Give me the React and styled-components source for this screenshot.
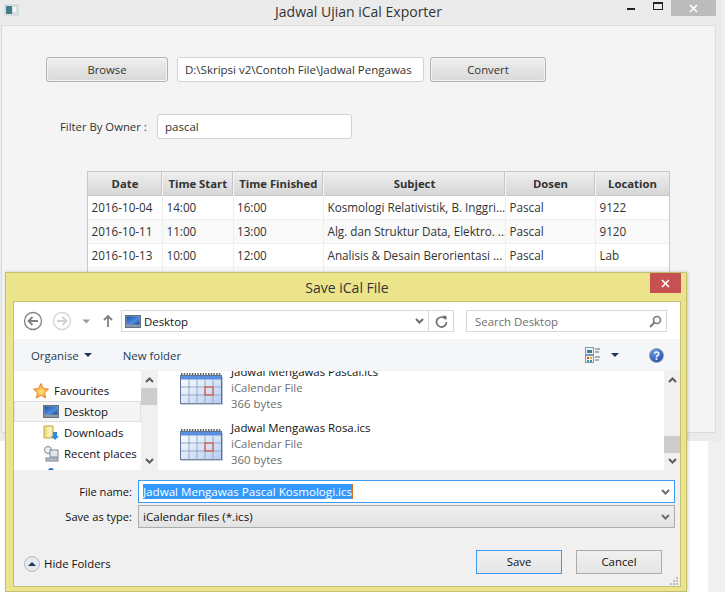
import styled, { createGlobalStyle } from 'styled-components';

const GlobalStyle = createGlobalStyle`
  html, body {
    margin: 0;
    padding: 0;
    background: #f0f0f0;
  }
  * { box-sizing: border-box; }
`;

const font = `"Open Sans", "Noto Sans", "Liberation Sans", sans-serif`;

const Desktop = styled.div`
  position: relative;
  width: 725px;
  height: 592px;
  overflow: hidden;
  font-family: ${font};
  color: #222;
  background: linear-gradient(to right, #fff 708px, #f0f0f0 708px);
`;

/* ---- javafx window behind ---- */
const AppWindow = styled.div`
  width: 722px;
  height: 441px;
  background: #ebebeb;
  padding-right: 6px;
  padding-left: 1px;
  display: flex;
  flex-direction: column;
`;
const AppTitleBar = styled.div`
  height: 25px;
  flex: none;
  display: grid;
  grid-template-columns: 1fr auto 1fr;
  align-items: start;
`;
const AppIcon = styled.div`
  margin: 4px 0 0 3px;
  line-height: 0;
`;
const AppTitle = styled.div`
  font-size: 14px;
  line-height: 23px;
  color: #333;
`;
const Controls = styled.div`
  justify-self: end;
  display: flex;
  align-items: flex-start;
`;
const CtrlMin = styled.div`
  width: 8px;
  height: 2px;
  margin: 8px 18px 0 0;
  background: #222;
`;
const CtrlMax = styled.div`
  width: 10px;
  height: 8px;
  margin: 2px 8px 0 0;
  border: 1px solid #222;
  border-top-width: 2px;
`;
const CtrlClose = styled.div`
  width: 45px;
  height: 16px;
  background: #bcbcbc;
  color: #fff;
  display: flex;
  align-items: center;
  justify-content: center;
`;
const Panel = styled.div`
  flex: none;
  height: 408px;
  background: #f4f4f4;
  border: 1px solid #dcdcdc;
  padding: 31px 0 0 44px;
  overflow: hidden;
`;
const Toolbar = styled.div`
  display: flex;
  gap: 6px;
  height: 25px;
`;
const FxButton = styled.div`
  width: ${(p) => p.$w}px;
  margin-right: ${(p) => p.$mr || 0}px;
  height: 25px;
  border: 1px solid #b2b2b2;
  border-radius: 3px;
  background: linear-gradient(#efefef, #d8d8d8);
  box-shadow: inset 0 0 0 1px #f4f4f4;
  font-size: 11.3px;
  line-height: 23px;
  text-align: center;
  color: #333;
`;
const FxInput = styled.div`
  width: ${(p) => p.$w}px;
  height: 25px;
  border: 1px solid #d2d2d2;
  border-radius: 3px;
  background: #fff;
  padding: 0 7px;
  font-size: 11.5px;
  line-height: 23px;
  color: #333;
  white-space: nowrap;
`;
const FieldText = styled.div`
  overflow: hidden;
  margin-right: 1px;
`;
const FilterRow = styled.div`
  display: flex;
  align-items: center;
  margin: 32px 0 0 14px;
`;
const FilterLabel = styled.div`
  width: 97px;
  font-size: 11.3px;
  color: #333;
`;
const Table = styled.div`
  width: 583px;
  margin: 32px 0 0 41px;
  border: 1px solid #c8c8c8;
  border-bottom: 0;
`;
const grid = `
  display: grid;
  grid-template-columns: 75px 70.5px 90.5px 182px 90px 1fr;
`;
const HeadRow = styled.div`
  ${grid}
  height: 24px;
  background: linear-gradient(#efefef, #d6d6d6);
  border-bottom: 1px solid #c8c8c8;
`;
const HeadCell = styled.div`
  border-right: 1px solid #f4f4f4;
  box-shadow: inset -1px 0 0 #c8c8c8;
  font-size: 11.3px;
  font-weight: 700;
  line-height: 24px;
  text-align: center;
  color: #333;
  white-space: nowrap;
  &:last-child { border-right: 0; box-shadow: none; }
`;
const Row = styled.div`
  ${grid}
  height: 24px;
  background: ${(p) => (p.$odd ? '#f9f9f9' : '#fff')};
  border-bottom: 1px solid #f0f0f0;
`;
const Cell = styled.div`
  border-right: 1px solid #eee;
  padding-left: 3.5px;
  font-size: 11.7px;
  line-height: 23px;
  color: #333;
  white-space: nowrap;
  overflow: hidden;
  &:last-child { border-right: 0; }
`;

/* ---- save dialog ---- */
const Dialog = styled.div`
  position: absolute;
  left: 5px;
  top: 272px;
  width: 682px;
  height: 320px;
  background: #ebe48b;
  border: 1px solid #c4bf72;
  box-shadow: 1px 0 3px rgba(0, 0, 0, 0.2);
  padding: 0 5px 4px 7px;
  display: flex;
  flex-direction: column;
`;
const DialogTitleBar = styled.div`
  height: 28px;
  flex: none;
  position: relative;
  display: flex;
  justify-content: center;
  align-items: center;
  font-size: 14px;
  color: #333;
`;
const DialogClose = styled.div`
  position: absolute;
  top: 0;
  right: 0;
  width: 31px;
  height: 20px;
  background: #c75050;
  display: flex;
  align-items: center;
  justify-content: center;
`;
const DialogBody = styled.div`
  flex: 1;
  display: flex;
  flex-direction: column;
  background: #f0f0f0;
  border: 1px solid #c4bf72;
  min-height: 0;
`;
const NavBar = styled.div`
  height: 37px;
  flex: none;
  background: #fff;
  display: flex;
  align-items: center;
  padding-top: 1px;
`;
const NavIcons = styled.div`
  width: 107px;
  padding-left: 9px;
  flex: none;
  line-height: 0;
`;
const AddressBox = styled.div`
  width: 333px;
  height: 22px;
  border: 1px solid #d9d9d9;
  display: flex;
  align-items: center;
  font-size: 11.4px;
  color: #111;
`;
const AddressText = styled.div`
  flex: 1;
  display: flex;
  align-items: center;
  gap: 3px;
  padding-left: 3px;
`;
const AddressBtn = styled.div`
  width: ${(p) => p.$w}px;
  height: 20px;
  display: flex;
  align-items: center;
  justify-content: center;
  border-left: ${(p) => (p.$sep ? '1px solid #d9d9d9' : '0')};
`;
const SearchBox = styled.div`
  width: 201px;
  height: 22px;
  margin-left: 12px;
  border: 1px solid #d9d9d9;
  display: flex;
  align-items: center;
  justify-content: space-between;
  padding: 0 4px 0 8px;
  font-size: 11.4px;
  color: #6d6d6d;
`;
const CmdBar = styled.div`
  height: 32px;
  flex: none;
  background: #f5f6f7;
  border-bottom: 1px solid #f0f0f0;
  display: flex;
  align-items: center;
  padding: 1px 16px 0 17px;
  font-size: 11.4px;
  color: #1e395b;
`;
const CmdItem = styled.div`
  display: flex;
  align-items: center;
  gap: ${(p) => p.$gap || 5}px;
  margin-right: ${(p) => p.$mr || 0}px;
`;
const CmdSpacer = styled.div`
  flex: 1;
`;
const Browser = styled.div`
  height: 99px;
  flex: none;
  background: #fff;
  display: flex;
  overflow: hidden;
`;
const NavPane = styled.div`
  width: 127px;
  flex: none;
  overflow: hidden;
  padding-top: 9px;
`;
const TreeItem = styled.div`
  height: 21px;
  display: flex;
  align-items: center;
  gap: 5px;
  padding-left: ${(p) => (p.$head ? 18 : 28)}px;
  font-size: 11.4px;
  color: #111;
  white-space: nowrap;
  background: ${(p) => (p.$sel ? '#f5f5f5' : 'transparent')};
  border: 1px solid ${(p) => (p.$sel ? '#dedede' : 'transparent')};
`;
const ScrollBar = styled.div`
  width: 16px;
  flex: none;
  background: #f0f0f0;
  display: flex;
  flex-direction: column;
  align-items: center;
  justify-content: space-between;
  padding: 6px 0;
  position: relative;
`;
const ScrollThumb = styled.div`
  position: absolute;
  left: 0;
  right: 0;
  top: ${(p) => p.$top}px;
  height: ${(p) => p.$h}px;
  background: #cdcdcd;
`;
const FileList = styled.div`
  flex: 1;
  border-left: 1px solid #f0f0f0;
  padding-left: 22px;
  overflow: hidden;
`;
const FileItem = styled.div`
  height: 48px;
  margin-top: ${(p) => p.$mt || 0}px;
  display: flex;
  gap: 8px;
  align-items: center;
  font-size: 11.4px;
`;
const FileIconBox = styled.div`
  line-height: 0;
  flex: none;
  margin-top: 1px;
`;
const FileName = styled.div`
  line-height: 16px;
  color: #111;
`;
const FileMeta = styled.div`
  line-height: 16px;
  color: #6d6d6d;
`;
const FormArea = styled.div`
  flex: 1;
  padding: 10px 5px 0 0;
  display: flex;
  flex-direction: column;
  gap: 2px;
  position: relative;
`;
const FormRow = styled.div`
  display: flex;
  align-items: center;
  height: 23px;
  font-size: 11.6px;
`;
const FormLabel = styled.div`
  width: 124px;
  flex: none;
  text-align: right;
  padding-right: 6px;
  font-size: 11.1px;
  color: #111;
`;
const FileInput = styled.div`
  flex: 1;
  height: 23px;
  display: flex;
  align-items: center;
  justify-content: space-between;
  padding: 0 4px 0 4px;
  color: #111;
  background: ${(p) => (p.$select ? 'linear-gradient(#f0f0f0, #e3e3e3)' : '#fff')};
  border: 1px solid ${(p) => (p.$select ? '#acacac' : '#3c9bf0')};
`;
const Selected = styled.span`
  background: #3399ff;
  color: #fff;
  border-right: 1px solid #d9701c;
  line-height: 15px;
`;
const ActionRow = styled.div`
  display: flex;
  align-items: center;
  margin: 20px 13px 0 10px;
  font-size: 11.4px;
  color: #111;
`;
const HideFolders = styled.div`
  display: flex;
  align-items: center;
  gap: 4px;
  margin-top: 3px;
  flex: 1;
`;
const DlgButton = styled.div`
  width: 86px;
  height: 24px;
  margin-left: 14px;
  border: 1px solid ${(p) => (p.$primary ? '#3c9bf0' : '#acacac')};
  background: linear-gradient(#f0f0f0, #e5e5e5);
  text-align: center;
  line-height: 22px;
`;
const Grip = styled.div`
  position: absolute;
  right: 2px;
  bottom: 1px;
  line-height: 0;
`;

const rows = [
  ['2016-10-04', '14:00', '16:00', 'Kosmologi Relativistik, B. Inggri...', 'Pascal', '9122'],
  ['2016-10-11', '11:00', '13:00', 'Alg. dan Struktur Data, Elektro. ...', 'Pascal', '9120'],
  ['2016-10-13', '10:00', '12:00', 'Analisis & Desain Berorientasi ...', 'Pascal', 'Lab'],
  ['', '', '', '', '', ''],
];
const heads = ['Date', 'Time Start', 'Time Finished', 'Subject', 'Dosen', 'Location'];

const CloseX = ({ size = 9 }) => (
  <svg width={size} height={size} viewBox="0 0 9 9">
    <path d="M1 1l7 7M8 1L1 8" stroke="#fff" strokeWidth="1.7" />
  </svg>
);

const Chevron = ({ up, color = '#5c5c5c' }) => (
  <svg width="9" height="6" viewBox="0 0 9 6">
    <path d={up ? 'M1 5l3.5-3.5L8 5' : 'M1 1l3.5 3.5L8 1'} fill="none" stroke={color} strokeWidth="2" />
  </svg>
);

const Caret = ({ color = '#1e395b' }) => (
  <svg width="8" height="4" viewBox="0 0 8 4">
    <path d="M0 0h8L4 4z" fill={color} />
  </svg>
);

const DesktopIcon = () => (
  <svg width="16" height="13" viewBox="0 0 16 13">
    <defs>
      <linearGradient id="screen" x1="0" y1="0" x2="1" y2="1">
        <stop offset="0" stopColor="#1d4fa8" />
        <stop offset="0.6" stopColor="#4d8de0" />
        <stop offset="1" stopColor="#1b3f8a" />
      </linearGradient>
    </defs>
    <rect x="0.5" y="0.5" width="15" height="12" fill="#8a97a6" stroke="#66717e" />
    <rect x="1.5" y="1.5" width="13" height="8" fill="url(#screen)" />
  </svg>
);

const CalendarIcon = () => (
  <svg width="43" height="33" viewBox="0 0 43 33">
    <defs>
      <linearGradient id="cal" x1="0" y1="0" x2="1" y2="1">
        <stop offset="0" stopColor="#fff" />
        <stop offset="1" stopColor="#b6cdf0" />
      </linearGradient>
    </defs>
    <rect x="0.5" y="3.5" width="41" height="28" fill="url(#cal)" stroke="#5d7396" />
    <rect x="1" y="4" width="40" height="3.5" fill="#5a8ee0" />
    <path d="M1 2h40" stroke="#333" strokeWidth="1.4" strokeDasharray="1.5 1.2" />
    <path d="M9 7v24M17 7v24M25 7v24M33 7v24M1 15h40M1 23h40" stroke="#8fa8cc" strokeWidth="1" />
    <rect x="25" y="15" width="8" height="8" fill="none" stroke="#e8401a" strokeWidth="1" />
    <path d="M1 32h42V5" fill="none" stroke="#8f9db2" strokeWidth="1.2" />
  </svg>
);

const NavButtons = () => (
  <svg width="100" height="20" viewBox="0 0 100 20">
    <circle cx="10" cy="10" r="8.5" fill="#fff" stroke="#808080" strokeWidth="1.3" />
    <path d="M15 10H6M9.5 6L5.5 10l4 4" fill="none" stroke="#808080" strokeWidth="1.8" />
    <circle cx="39" cy="10" r="8.5" fill="#fff" stroke="#d4d4d4" strokeWidth="1.3" />
    <path d="M34 10h9M39.5 6l4 4-4 4" fill="none" stroke="#d0d0d0" strokeWidth="1.8" />
    <path d="M59.5 8.5h7.5l-3.75 4z" fill="#9a9a9a" />
    <path d="M85 16V5M81 9l4-4 4 4" fill="none" stroke="#808080" strokeWidth="1.8" />
  </svg>
);

export default function App() {
  return (
    <Desktop>
      <GlobalStyle />
      <AppWindow>
        <AppTitleBar>
          <AppIcon>
            <svg width="15" height="12" viewBox="0 0 15 12">
              <rect width="15" height="12" fill="#d5dde0" />
              <rect x="2" y="2" width="6" height="8" fill="#3f7f86" />
              <rect x="9" y="3" width="3" height="5" fill="#f4f6f6" />
            </svg>
          </AppIcon>
          <AppTitle>Jadwal Ujian iCal Exporter</AppTitle>
          <Controls>
            <CtrlMin />
            <CtrlMax />
            <CtrlClose>
              <CloseX />
            </CtrlClose>
          </Controls>
        </AppTitleBar>
        <Panel>
          <Toolbar>
            <FxButton $w={122} $mr={3}>Browse</FxButton>
            <FxInput $w={247}>
              <FieldText>D:\Skripsi v2\Contoh File\Jadwal Pengawas Ujian.xlsx</FieldText>
            </FxInput>
            <FxButton $w={116}>Convert</FxButton>
          </Toolbar>
          <FilterRow>
            <FilterLabel>Filter By Owner :</FilterLabel>
            <FxInput $w={195}>pascal</FxInput>
          </FilterRow>
          <Table>
            <HeadRow>
              {heads.map((h) => (
                <HeadCell key={h}>{h}</HeadCell>
              ))}
            </HeadRow>
            {rows.map((r, i) => (
              <Row key={i} $odd={i % 2 === 1}>
                {r.map((c, j) => (
                  <Cell key={j}>{c}</Cell>
                ))}
              </Row>
            ))}
          </Table>
        </Panel>
      </AppWindow>

      <Dialog>
        <DialogTitleBar>
          Save iCal File
          <DialogClose>
            <CloseX />
          </DialogClose>
        </DialogTitleBar>
        <DialogBody>
          <NavBar>
            <NavIcons>
              <NavButtons />
            </NavIcons>
            <AddressBox>
              <AddressText>
                <DesktopIcon />
                Desktop
              </AddressText>
              <AddressBtn $w={18}>
                <Chevron color="#6d6d6d" />
              </AddressBtn>
              <AddressBtn $w={25} $sep>
                <svg width="13" height="13" viewBox="0 0 13 13">
                  <path d="M10.5 4A5 5 0 1 0 11.5 7" fill="none" stroke="#6d6d6d" strokeWidth="1.7" />
                  <path d="M7.5 0.5l4 0.5v4z" fill="#6d6d6d" />
                </svg>
              </AddressBtn>
            </AddressBox>
            <SearchBox>
              Search Desktop
              <svg width="13" height="13" viewBox="0 0 13 13">
                <circle cx="8" cy="5" r="3.5" fill="none" stroke="#7a7a7a" strokeWidth="1.7" />
                <path d="M5.5 7.5L1 12" stroke="#7a7a7a" strokeWidth="2.2" />
              </svg>
            </SearchBox>
          </NavBar>
          <CmdBar>
            <CmdItem $mr={31}>
              Organise
              <Caret />
            </CmdItem>
            <CmdItem>New folder</CmdItem>
            <CmdSpacer />
            <CmdItem $mr={30} $gap={10}>
              <svg width="16" height="16" viewBox="0 0 16 16">
                <rect x="0.5" y="0.5" width="8" height="7" fill="#e8f0f8" stroke="#7d97bf" />
                <rect x="2" y="3" width="5" height="3" fill="#3f7f86" />
                <rect x="0.5" y="8.5" width="8" height="7" fill="#f3f3f3" stroke="#7d97bf" />
                <rect x="2" y="10" width="2" height="2" fill="#d9472b" />
                <rect x="5" y="10" width="2" height="2" fill="#e0b020" />
                <rect x="2" y="13" width="2" height="2" fill="#4aa04a" />
                <rect x="5" y="13" width="2" height="2" fill="#3f7fd0" />
                <path d="M10 2h5M10 5h4M10 10h5M10 13h4" stroke="#666" strokeWidth="1" />
              </svg>
              <Caret />
            </CmdItem>
            <svg width="15" height="15" viewBox="0 0 15 15">
              <defs>
                <radialGradient id="help" cx="0.4" cy="0.3" r="0.8">
                  <stop offset="0" stopColor="#6fa0e8" />
                  <stop offset="1" stopColor="#1840a8" />
                </radialGradient>
              </defs>
              <circle cx="7.5" cy="7.5" r="7" fill="url(#help)" stroke="#9aa5b4" />
              <path d="M5.5 5.5c.5-2 4.5-2 4.3.3C9.6 7.4 7.5 7.4 7.4 9.4" fill="none" stroke="#fff" strokeWidth="1.4" />
              <rect x="6.6" y="10.4" width="1.6" height="1.6" fill="#fff" />
            </svg>
          </CmdBar>
          <Browser>
            <NavPane>
              <TreeItem $head>
                <svg width="16" height="16" viewBox="0 0 16 16">
                  <defs>
                    <radialGradient id="star" cx="0.5" cy="0.55" r="0.55">
                      <stop offset="0" stopColor="#ffe27a" />
                      <stop offset="1" stopColor="#f59a2e" />
                    </radialGradient>
                  </defs>
                  <path d="M8 0.5l2.3 5 5.2.6-3.9 3.6 1.1 5.3L8 12.3 3.3 15l1.1-5.3L.5 6.1l5.2-.6z" fill="url(#star)" stroke="#e8853a" />
                </svg>
                Favourites
              </TreeItem>
              <TreeItem $sel>
                <DesktopIcon />
                Desktop
              </TreeItem>
              <TreeItem>
                <svg width="16" height="16" viewBox="0 0 16 16">
                  <path d="M1 1h9v12H1z" fill="#ecd98a" stroke="#c8a94e" />
                  <path d="M4 2h5v10H4z" fill="#f7eeb8" />
                  <path d="M10 7h4v4h2l-4 4-4-4h2z" fill="#2f8ae0" />
                </svg>
                Downloads
              </TreeItem>
              <TreeItem>
                <svg width="16" height="16" viewBox="0 0 16 16">
                  <circle cx="5" cy="4" r="3.5" fill="#eef1f4" stroke="#7b8794" />
                  <rect x="7" y="4" width="8" height="7" fill="#dfe6ec" stroke="#7b8794" />
                  <rect x="3" y="12" width="12" height="3" fill="#b8c2cc" stroke="#7b8794" />
                </svg>
                Recent places
              </TreeItem>
              <TreeItem>
                <svg width="16" height="16" viewBox="0 0 16 16">
                  <circle cx="8" cy="4" r="3" fill="#2f6fb8" />
                </svg>
              </TreeItem>
            </NavPane>
            <ScrollBar>
              <ScrollThumb $top={17} $h={17} />
              <Chevron up />
              <Chevron />
            </ScrollBar>
            <FileList>
              <FileItem $mt={-7}>
                <FileIconBox>
                  <CalendarIcon />
                </FileIconBox>
                <div>
                  <FileName>Jadwal Mengawas Pascal.ics</FileName>
                  <FileMeta>iCalendar File</FileMeta>
                  <FileMeta>366 bytes</FileMeta>
                </div>
              </FileItem>
              <FileItem $mt={8}>
                <FileIconBox>
                  <CalendarIcon />
                </FileIconBox>
                <div>
                  <FileName>Jadwal Mengawas Rosa.ics</FileName>
                  <FileMeta>iCalendar File</FileMeta>
                  <FileMeta>360 bytes</FileMeta>
                </div>
              </FileItem>
            </FileList>
            <ScrollBar>
              <ScrollThumb $top={65} $h={17} />
              <Chevron up />
              <Chevron />
            </ScrollBar>
          </Browser>
          <FormArea>
            <FormRow>
              <FormLabel>File name:</FormLabel>
              <FileInput>
                <Selected>Jadwal Mengawas Pascal Kosmologi.ics</Selected>
                <Chevron color="#6d6d6d" />
              </FileInput>
            </FormRow>
            <FormRow>
              <FormLabel>Save as type:</FormLabel>
              <FileInput $select>
                iCalendar files (*.ics)
                <Chevron color="#6d6d6d" />
              </FileInput>
            </FormRow>
            <ActionRow>
              <HideFolders>
                <svg width="16" height="16" viewBox="0 0 16 16">
                  <circle cx="8" cy="8" r="7.5" fill="#e4e9f0" stroke="#b4bcc8" />
                  <path d="M4 10l4-4 4 4z" fill="#1e395b" />
                </svg>
                Hide Folders
              </HideFolders>
              <DlgButton $primary>Save</DlgButton>
              <DlgButton>Cancel</DlgButton>
            </ActionRow>
            <Grip>
              <svg width="8" height="8" viewBox="0 0 8 8">
                <path d="M6 0h2v2H6zM3 3h2v2H3zM6 3h2v2H6zM0 6h2v2H0zM3 6h2v2H3zM6 6h2v2H6z" fill="#bdbdbd" />
              </svg>
            </Grip>
          </FormArea>
        </DialogBody>
      </Dialog>
    </Desktop>
  );
}
